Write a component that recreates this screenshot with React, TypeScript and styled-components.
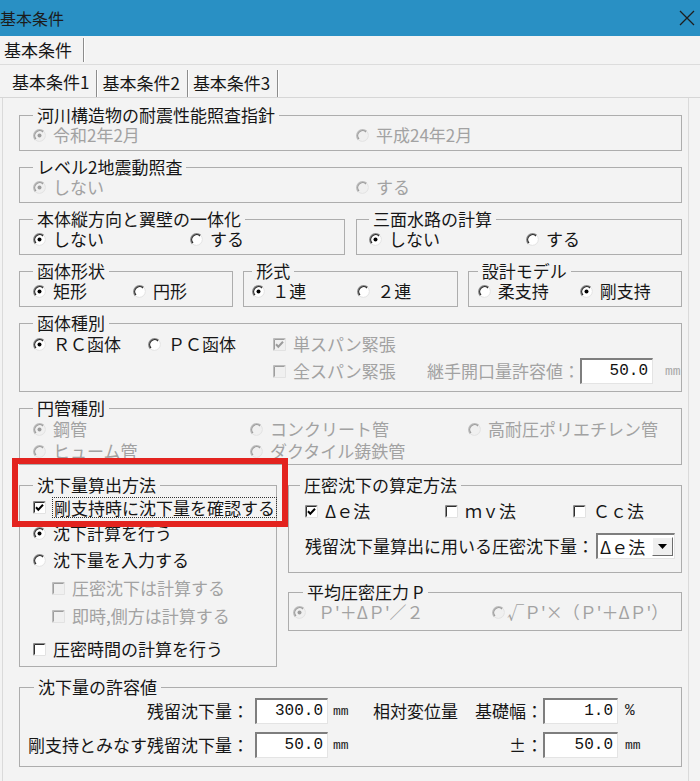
import React from "react";
import styled, { createGlobalStyle } from "styled-components";

const FONT = `"Noto Sans CJK JP", "Noto Sans", sans-serif`;
const TEXT = "#161616";
const DIS = "#a2a2a2";

const GlobalStyle = createGlobalStyle`
  html, body { margin: 0; padding: 0; background: #f3f3f3; }
  body { font-family: ${FONT}; }
`;

const Window = styled.div`
  position: relative;
  width: 700px;
  height: 781px;
  overflow: hidden;
  background: #f3f3f3;
  display: flex;
  flex-direction: column;
  font-family: ${FONT};
  font-size: 17px;
  color: ${TEXT};
`;

const TitleBar = styled.header`
  flex: none;
  height: 36px;
  background: #2990c4;
  display: flex;
  align-items: center;
  justify-content: space-between;
  padding-right: 5px;
`;

const TitleText = styled.span`
  font-size: 16px;
  line-height: 20px;
  color: #1c1c1c;
`;

const OuterTabs = styled.div`
  flex: none;
  height: 28px;
  border-bottom: 1px solid #dcdcdc;
  display: flex;
  align-items: center;
`;

const OuterTab = styled.div`
  height: 24px;
  line-height: 24px;
  padding: 0 11px 0 4px;
  border-right: 1px solid #8c8c8c;
  box-shadow: 1px 0 0 #fff;
`;

const InnerTabs = styled.div`
  flex: none;
  height: 32px;
  border-bottom: 1px solid #d6d6d6;
  display: flex;
  align-items: flex-end;
  padding-left: 7px;
`;

const InnerTab = styled.div<{ $active?: boolean }>`
  height: 27px;
  line-height: ${(p) => (p.$active ? 24 : 25)}px;
  padding: 0 7px 0 5px;
  border-right: 1px solid #8c8c8c;
  box-shadow: 1px 0 0 #fff;
`;

const Panel = styled.main`
  flex: 1;
  display: flex;
  flex-direction: column;
  gap: 6px;
  margin: 0 11px 0 2px;
  padding: 7px 6px 0 16px;
  border-left: 1px solid #dadada;
  border-right: 1px solid #dadada;
`;

const Split = styled.div<{ $cols: string; $gap?: number; $mt?: number }>`
  display: grid;
  grid-template-columns: ${(p) => p.$cols};
  column-gap: ${(p) => p.$gap ?? 10}px;
  align-items: start;
  margin-top: ${(p) => p.$mt ?? 0}px;
`;

const Stack = styled.div`
  display: flex;
  flex-direction: column;
  gap: 9px;
  min-width: 0;
`;

const Group = styled.fieldset<{ $pl?: number; $pr?: number; $pb?: number; $mt?: number }>`
  margin: ${(p) => p.$mt ?? 0}px 0 0 0;
  min-width: 0;
  padding: 0 ${(p) => p.$pr ?? 6}px ${(p) => p.$pb ?? 5}px ${(p) => p.$pl ?? 13}px;
  border: 1px solid #adadad;
`;

const Legend = styled.legend<{ $ml?: number }>`
  padding: 0 4px;
  margin-left: ${(p) => p.$ml ?? 0}px;
  height: 20px;
  line-height: 20px;
  color: ${TEXT};
  white-space: nowrap;
`;

const Row = styled.div<{ $h: number; $mt?: number; $cols?: string }>`
  display: grid;
  grid-template-columns: ${(p) => p.$cols ?? "auto"};
  align-items: center;
  height: ${(p) => p.$h}px;
  margin-top: ${(p) => p.$mt ?? 0}px;
`;

const FlexRow = styled.div<{ $h: number; $mt?: number }>`
  display: flex;
  align-items: center;
  height: ${(p) => p.$h}px;
  margin-top: ${(p) => p.$mt ?? 0}px;
`;

const Option = styled.label<{ $disabled?: boolean; $indent?: number; $gap?: number }>`
  display: flex;
  align-items: center;
  gap: ${(p) => p.$gap ?? 7}px;
  white-space: nowrap;
  line-height: 20px;
  color: ${(p) => (p.$disabled ? DIS : TEXT)};
  padding-left: ${(p) => p.$indent ?? 0}px;
  min-width: 0;
`;

const FocusText = styled.span`
  outline: 1px dotted #333;
  outline-offset: 0;
  padding: 0 1px;
  line-height: 19px;
`;

const Text = styled.span<{ $disabled?: boolean; $right?: boolean; $pr?: number }>`
  white-space: nowrap;
  line-height: 20px;
  color: ${(p) => (p.$disabled ? DIS : TEXT)};
  text-align: ${(p) => (p.$right ? "right" : "left")};
  padding-right: ${(p) => p.$pr ?? 0}px;
`;

const NumBox = styled.div<{ $w: number }>`
  box-sizing: border-box;
  width: ${(p) => p.$w}px;
  height: 26px;
  background: #fff;
  border-style: solid;
  border-width: 2px 1px 1px 2px;
  border-color: #7e7e7e #e4e4e4 #e4e4e4 #7e7e7e;
  font-family: "Liberation Mono", monospace;
  font-size: 16px;
  line-height: 22px;
  text-align: right;
  padding-right: 4px;
  color: #111;
`;

const Unit = styled.span<{ $disabled?: boolean; $size?: number }>`
  font-family: "Liberation Mono", monospace;
  font-size: ${(p) => p.$size ?? 13}px;
  color: ${(p) => (p.$disabled ? "#a8a8a8" : "#222")};
  white-space: nowrap;
`;

const Select = styled.div`
  box-sizing: border-box;
  width: 83px;
  height: 26px;
  display: flex;
  align-items: center;
  background: #fff;
  border-style: solid;
  border-width: 2px 1px 1px 2px;
  border-color: #7e7e7e #e4e4e4 #e4e4e4 #7e7e7e;
  padding: 1px 1px 1px 2px;
  margin-left: 2px;
`;

const SelectText = styled.span`
  flex: 1;
  line-height: 20px;
  white-space: nowrap;
`;

const DropButton = styled.span`
  box-sizing: border-box;
  width: 21px;
  height: 19px;
  background: #efefef;
  border: 1px solid;
  border-color: #fff #6c6c6c #6c6c6c #fff;
  display: flex;
  align-items: center;
  justify-content: center;
`;

const Highlight = styled.div`
  position: absolute;
  left: 12px;
  top: 458px;
  width: 276px;
  height: 69px;
  box-sizing: border-box;
  border: 6px solid #e3231f;
  pointer-events: none;
`;

function RadioIcon({ checked, disabled }: { checked?: boolean; disabled?: boolean }) {
  return (
    <svg width="13" height="13" viewBox="0 0 13 13" style={{ flex: "none" }}>
      <circle cx="6.5" cy="6.5" r="6" fill={disabled ? "#f0f0f0" : "#fff"} />
      <path d="M2.26 10.74 A6 6 0 0 1 10.74 2.26" fill="none" stroke={disabled ? "#bdbdbd" : "#8a8a8a"} strokeWidth="1.2" />
      <path d="M2.97 10.03 A5 5 0 0 1 10.03 2.97" fill="none" stroke={disabled ? "#9e9e9e" : "#2e2e2e"} strokeWidth="1.3" />
      <path d="M10.74 2.26 A6 6 0 0 1 2.26 10.74" fill="none" stroke="#e2e2e2" strokeWidth="1" />
      {checked && <circle cx="6.5" cy="6.5" r="2" fill={disabled ? "#9c9c9c" : "#000"} />}
    </svg>
  );
}

function CheckIcon({ checked, disabled }: { checked?: boolean; disabled?: boolean }) {
  return (
    <svg width="13" height="13" viewBox="0 0 13 13" style={{ flex: "none" }}>
      <rect x="0" y="0" width="13" height="13" fill={disabled ? "#f0f0f0" : "#fff"} />
      <path d="M0.5 12.5V0.5H12.5" fill="none" stroke={disabled ? "#bdbdbd" : "#8a8a8a"} />
      <path d="M1.5 11.5V1.5H11.5" fill="none" stroke={disabled ? "#9e9e9e" : "#2e2e2e"} />
      <path d="M0.5 12.5H12.5V0.5" fill="none" stroke="#e2e2e2" />
      {checked && (
        <path d="M3 6.3 L5.3 8.7 L10 3.8" fill="none" stroke={disabled ? "#9c9c9c" : "#000"} strokeWidth="2" />
      )}
    </svg>
  );
}

type OptProps = {
  label: React.ReactNode;
  checked?: boolean;
  disabled?: boolean;
  indent?: number;
  gap?: number;
  focus?: boolean;
};

function Radio({ label, checked, disabled, indent, gap }: OptProps) {
  return (
    <Option $disabled={disabled} $indent={indent} $gap={gap}>
      <RadioIcon checked={checked} disabled={disabled} />
      <span>{label}</span>
    </Option>
  );
}

function Check({ label, checked, disabled, indent, gap, focus }: OptProps) {
  return (
    <Option $disabled={disabled} $indent={indent} $gap={gap}>
      <CheckIcon checked={checked} disabled={disabled} />
      {focus ? <FocusText>{label}</FocusText> : <span>{label}</span>}
    </Option>
  );
}

function CloseIcon() {
  return (
    <svg width="16" height="16" viewBox="0 0 16 16">
      <path d="M1 1 L15 15 M15 1 L1 15" stroke="#1e1e1e" strokeWidth="1.3" />
    </svg>
  );
}

function ArrowDown() {
  return (
    <svg width="9" height="5" viewBox="0 0 9 5">
      <path d="M0 0 H9 L4.5 5 Z" fill="#000" />
    </svg>
  );
}

export default function App() {
  return (
    <>
      <GlobalStyle />
      <Window>
        <TitleBar>
          <TitleText>基本条件</TitleText>
          <CloseIcon />
        </TitleBar>
        <OuterTabs>
          <OuterTab>基本条件</OuterTab>
        </OuterTabs>
        <InnerTabs>
          {["基本条件1", "基本条件2", "基本条件3"].map((t, i) => (
            <InnerTab key={t} $active={i === 0}>
              {t}
            </InnerTab>
          ))}
        </InnerTabs>
        <Panel>
          <Group>
            <Legend>河川構造物の耐震性能照査指針</Legend>
            <Row $h={20} $cols="323px auto">
              <Radio checked disabled label="令和2年2月" />
              <Radio disabled label="平成24年2月" />
            </Row>
          </Group>

          <Group>
            <Legend>レベル2地震動照査</Legend>
            <Row $h={20} $cols="323px auto">
              <Radio checked disabled label="しない" />
              <Radio disabled label="する" />
            </Row>
          </Group>

          <Split $cols="1fr 1fr" $gap={11}>
            <Group>
              <Legend>本体縦方向と翼壁の一体化</Legend>
              <Row $h={20} $cols="157px auto">
                <Radio checked label="しない" />
                <Radio label="する" />
              </Row>
            </Group>
            <Group $pl={12}>
              <Legend>三面水路の計算</Legend>
              <Row $h={20} $cols="157px auto">
                <Radio checked label="しない" />
                <Radio label="する" />
              </Row>
            </Group>
          </Split>

          <Split $cols="1fr 1fr 1fr" $gap={10}>
            <Group>
              <Legend>函体形状</Legend>
              <Row $h={20} $cols="100px auto">
                <Radio checked label="矩形" />
                <Radio label="円形" />
              </Row>
            </Group>
            <Group $pl={8}>
              <Legend>形式</Legend>
              <Row $h={20} $cols="105px auto">
                <Radio checked label="１連" />
                <Radio label="２連" />
              </Row>
            </Group>
            <Group $pl={9}>
              <Legend>設計モデル</Legend>
              <Row $h={20} $cols="102px auto">
                <Radio label="柔支持" />
                <Radio checked label="剛支持" />
              </Row>
            </Group>
          </Split>

          <Group $pb={6}>
            <Legend>函体種別</Legend>
            <Row $h={22} $cols="115px 125px 154px 153px 85px auto">
              <Radio checked label="ＲＣ函体" />
              <Radio label="ＰＣ函体" />
              <Check checked disabled label="単スパン緊張" />
            </Row>
            <Row $h={28} $mt={2} $cols="115px 125px 154px 153px 85px auto">
              <span />
              <span />
              <Check disabled label="全スパン緊張" />
              <Text $disabled>継手開口量許容値：</Text>
              <NumBox $w={73}>50.0</NumBox>
              <Unit $disabled>mm</Unit>
            </Row>
          </Group>

          <Group $pb={2}>
            <Legend>円管種別</Legend>
            <Row $h={22} $cols="217px 218px auto">
              <Radio checked disabled label="鋼管" />
              <Radio disabled label="コンクリート管" />
              <Radio disabled label="高耐圧ポリエチレン管" />
            </Row>
            <Row $h={22} $cols="217px 218px auto">
              <Radio disabled label="ヒューム管" />
              <Radio disabled label="ダクタイル鋳鉄管" />
            </Row>
          </Group>

          <Split $cols="258px 1fr" $gap={11} $mt={4}>
            <Group $pb={3}>
              <Legend>沈下量算出方法</Legend>
              <FlexRow $h={25}>
                <Check checked focus label="剛支持時に沈下量を確認する" />
              </FlexRow>
              <FlexRow $h={26}>
                <Radio checked label="沈下計算を行う" />
              </FlexRow>
              <FlexRow $h={28}>
                <Radio label="沈下量を入力する" />
              </FlexRow>
              <FlexRow $h={28}>
                <Check disabled indent={19} label="圧密沈下は計算する" />
              </FlexRow>
              <FlexRow $h={28}>
                <Check disabled indent={19} label="即時,側方は計算する" />
              </FlexRow>
              <FlexRow $h={28} $mt={5}>
                <Check label="圧密時間の計算を行う" />
              </FlexRow>
            </Group>

            <Stack>
              <Group $pl={16} $pb={12}>
                <Legend $ml={-5}>圧密沈下の算定方法</Legend>
                <Row $h={22} $mt={5} $cols="140px 128px auto">
                  <Check checked label="Δｅ法" />
                  <Check label="ｍｖ法" />
                  <Check label="Ｃｃ法" />
                </Row>
                <FlexRow $h={28} $mt={10}>
                  <Text>残留沈下量算出に用いる圧密沈下量：</Text>
                  <Select>
                    <SelectText>Δｅ法</SelectText>
                    <DropButton>
                      <ArrowDown />
                    </DropButton>
                  </Select>
                </FlexRow>
              </Group>

              <Group $pl={4} $pr={0} $pb={8}>
                <Legend $ml={10}>平均圧密圧力 P</Legend>
                <Row $h={20} $cols="199px 1fr">
                  <Radio checked disabled gap={12} label="Ｐ'＋ΔＰ'／２" />
                  <Radio disabled gap={2} label="√Ｐ'×（Ｐ'＋ΔＰ'）" />
                </Row>
              </Group>
            </Stack>
          </Split>

          <Group $pl={8} $pb={8} $mt={4}>
            <Legend $ml={6}>沈下量の許容値</Legend>
            <Row $h={26} $mt={1} $cols="227px 78px 39px 171px 82px auto">
              <Text $right $pr={6}>残留沈下量：</Text>
              <NumBox $w={73}>300.0</NumBox>
              <Unit>mm</Unit>
              <Text $right>相対変位量　基礎幅：</Text>
              <NumBox $w={75}>1.0</NumBox>
              <Unit $size={16}>%</Unit>
            </Row>
            <Row $h={26} $mt={8} $cols="227px 78px 39px 171px 82px auto">
              <Text $right $pr={6}>剛支持とみなす残留沈下量：</Text>
              <NumBox $w={73}>50.0</NumBox>
              <Unit>mm</Unit>
              <Text $right>±：</Text>
              <NumBox $w={75}>50.0</NumBox>
              <Unit>mm</Unit>
            </Row>
          </Group>
        </Panel>
        <Highlight />
      </Window>
    </>
  );
}
